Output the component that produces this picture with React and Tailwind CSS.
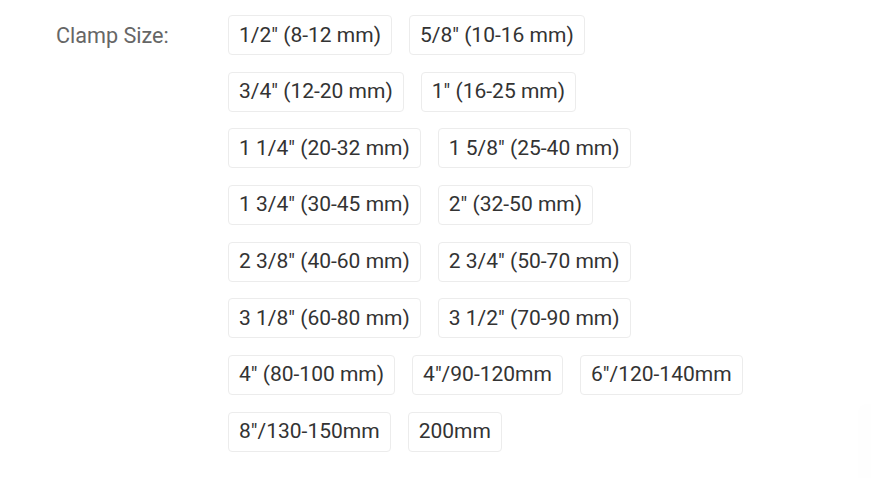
const sizes = [
  '1/2" (8-12 mm)',
  '5/8" (10-16 mm)',
  '3/4" (12-20 mm)',
  '1" (16-25 mm)',
  '1 1/4" (20-32 mm)',
  '1 5/8" (25-40 mm)',
  '1 3/4" (30-45 mm)',
  '2" (32-50 mm)',
  '2 3/8" (40-60 mm)',
  '2 3/4" (50-70 mm)',
  '3 1/8" (60-80 mm)',
  '3 1/2" (70-90 mm)',
  '4" (80-100 mm)',
  '4"/90-120mm',
  '6"/120-140mm',
  '8"/130-150mm',
  '200mm',
];

export default function App() {
  return (
    <div
      className="relative w-[871px] h-[478px] bg-white overflow-hidden"
      style={{ fontFamily: 'Roboto, "Liberation Sans", sans-serif' }}
    >
      <div className="flex pt-[15px] pl-[56px]">
        <div className="w-[172px] shrink-0 h-[40px] mt-[1px] flex items-center text-[21.6px] text-[#666666]">
          Clamp Size:
        </div>
        <div className="w-[530px] flex flex-wrap gap-x-[17px] gap-y-[16.67px]">
          {sizes.map((s) => (
            <button
              key={s}
              type="button"
              className="h-[40px] px-[10px] border border-[#ececec] rounded-[4px] bg-white text-[21px] text-[#333333] leading-none flex items-center whitespace-nowrap"
            >
              {s}
            </button>
          ))}
        </div>
      </div>
      {/* floating widget peeking in at the bottom-right edge */}
      <div className="absolute right-[-40px] top-[405px] w-[52px] h-[90px] rounded-[6px] bg-[#fefefe] shadow-[0_0_4px_rgba(0,0,0,0.012)]" />
    </div>
  );
}
